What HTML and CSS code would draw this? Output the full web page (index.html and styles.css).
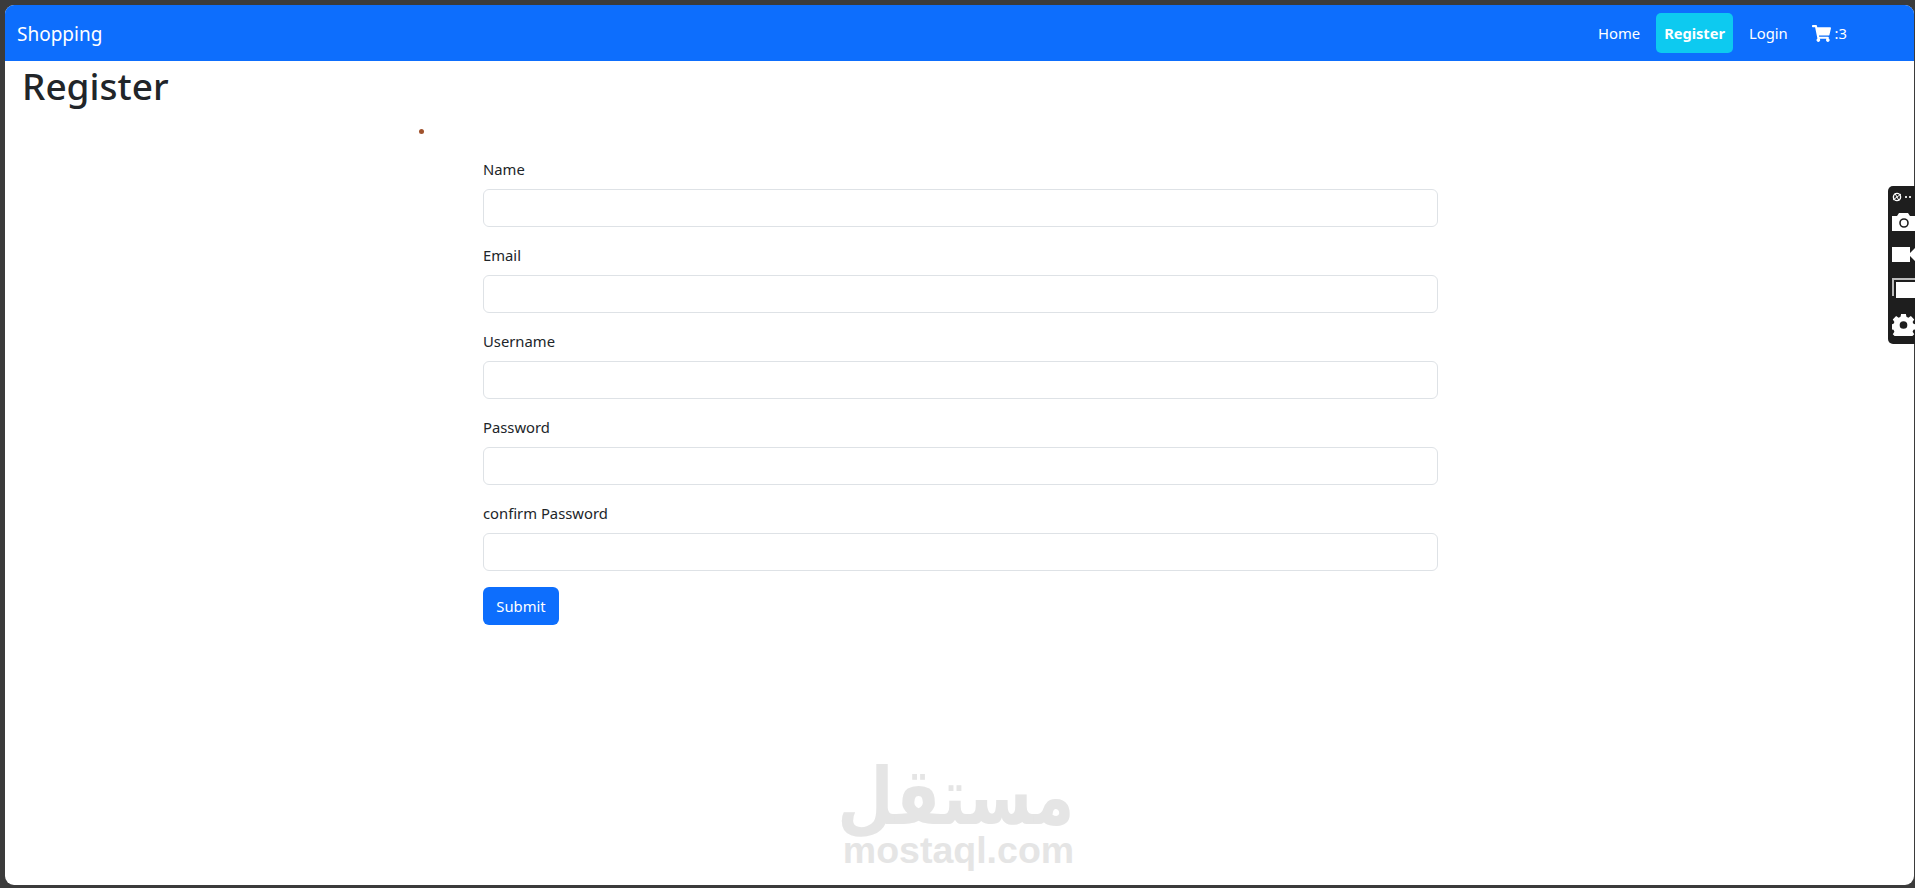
FILE: index.html
```html
<!DOCTYPE html>
<html lang="en">
<head>
  <meta charset="UTF-8" />
  <meta name="viewport" content="width=device-width, initial-scale=1.0" />
  <title>Register</title>
  <link rel="stylesheet" href="styles.css">
</head>
<body>
  <div class="app">
    <nav class="navbar">
      <a class="brand" href="#">Shopping</a>
      <ul class="nav-list">
        <li><a class="nav-link" href="#">Home</a></li>
        <li><a class="nav-link active" href="#">Register</a></li>
        <li><a class="nav-link" href="#">Login</a></li>
        <li>
          <a class="nav-link" href="#">
            <svg class="cart-icon" viewBox="0 0 576 512"><path fill="currentColor" d="M528.12 301.319l47.273-208C578.806 78.301 567.391 64 551.99 64H159.208l-9.166-44.81C147.758 8.021 137.93 0 126.529 0H24C10.745 0 0 10.745 0 24v16c0 13.255 10.745 24 24 24h69.883l70.248 343.435C147.325 417.1 136 435.222 136 456c0 30.928 25.072 56 56 56s56-25.072 56-56c0-15.674-6.447-29.835-16.824-40h209.647C430.447 426.165 424 440.326 424 456c0 30.928 25.072 56 56 56s56-25.072 56-56c0-22.172-12.888-41.332-31.579-50.405l5.517-24.276c3.413-15.018-8.002-29.319-23.403-29.319H218.117l-6.545-32h293.145c11.206 0 20.92-7.754 23.403-18.681z"/></svg>
            :3
          </a>
        </li>
      </ul>
    </nav>

    <main class="page">
      <h1>Register</h1>
      <div class="summary"><span class="summary-dot"></span></div>

      <form class="register-form">
        <div class="field">
          <label for="name">Name</label>
          <input id="name" type="text">
        </div>
        <div class="field">
          <label for="email">Email</label>
          <input id="email" type="text">
        </div>
        <div class="field">
          <label for="username">Username</label>
          <input id="username" type="text">
        </div>
        <div class="field">
          <label for="password">Password</label>
          <input id="password" type="password">
        </div>
        <div class="field">
          <label for="confirm">confirm Password</label>
          <input id="confirm" type="password">
        </div>
        <button class="submit-btn" type="button">Submit</button>
      </form>
    </main>

    <!-- Watermark -->
    <div class="watermark">
      <div class="watermark-ar" lang="ar" dir="rtl">مستقل</div>
      <div class="watermark-en">mostaql.com</div>
    </div>
  </div>

  <!-- Capture toolbar, cut off by the window edge -->
  <div class="capture-bar">
    <svg class="bar-link" viewBox="0 0 27 12">
      <circle cx="5" cy="6" r="3.6" fill="none" stroke="#fff" stroke-width="1.4"/>
      <path d="M1 9 L9 3 M3 2.500 L7 9.500" stroke="#fff" stroke-width="1"/>
      <rect x="13" y="5" width="2" height="2" fill="#ddd"/>
      <rect x="17" y="5" width="2" height="2" fill="#ddd"/>
    </svg>
    <svg class="bar-icon" viewBox="0 0 23 18">
      <path fill="#fff" d="M0 3H5L7 0H16L18 3H23V18H0Z"/>
      <circle cx="12" cy="10" r="4" fill="none" stroke="#1e1e1e" stroke-width="1.6"/>
    </svg>
    <svg class="bar-icon" viewBox="0 0 23 17">
      <path fill="#fff" d="M0 1H18V7L23 2V15L18 10V16H0Z"/>
    </svg>
    <svg class="bar-icon" viewBox="0 0 23 20">
      <path fill="#bbb" d="M0 0H23V2H2V18H0Z"/>
      <path fill="#fff" d="M4 4H23V20H4Z"/>
    </svg>
    <svg class="bar-icon" viewBox="0 0 24 24">
      <path fill="#fff" fill-rule="evenodd" d="M9.500 1h5l.6 3 2 .9 2.600-1.700 3.500 3.500-1.700 2.600.9 2 3 .6v5l-3 .6-.9 2 1.700 2.600-3.500 3.500-2.600-1.700-2 .9-.6 2h-5l-.6-2-2-.9-2.600 1.700-3.500-3.500 1.700-2.600-.9-2-3-.6v-5l3-.6.9-2-1.700-2.600 3.500-3.500 2.600 1.700 2-.9zM12 8.500a4 4 0 1 0 0 8 4 4 0 0 0 0-8z"/>
    </svg>
  </div>
</body>
</html>
```

FILE: styles.css
```css
* { box-sizing: border-box; }
html, body { height: 100%; }
body {
  margin: 0;
  padding: 5px 1px 3px 5px;
  overflow: hidden;
  background: #3b3b3b;
  font-family: "Noto Sans", sans-serif;
  font-size: 14.8px;
  line-height: 24px;
  color: #212529;
}
a { text-decoration: none; color: inherit; }

.app {
  position: relative;
  height: 100%;
  background: white;
  border-radius: 9px;
  overflow: hidden;
}

/* Navbar */
.navbar {
  display: flex;
  align-items: center;
  justify-content: space-between;
  height: 56px;
  padding: 8px 59px 8px 12px;
  background: #0d6efd;
  color: white;
}
.brand { padding-top: 2px; font-size: 19px; }
.nav-list { display: flex; gap: 8px; margin: 0; padding: 0; list-style: none; }
.nav-link { display: block; height: 40px; padding: 8px; border-radius: 5px; }
.nav-link.active { background: #0dcaf0; font-size: 14.6px; font-weight: 700; }
.cart-icon { width: 19px; height: 17px; vertical-align: -3px; }

/* Page */
.page { padding: 0 17px; }
h1 { margin: 0 0 8px; padding-top: 1px; height: 48px; font-size: 37px; line-height: 48px; font-weight: 500; }
.summary { height: 24px; margin-bottom: 16px; padding-left: 397px; padding-top: 12px; }
.summary-dot { display: block; width: 5px; height: 5px; border-radius: 50%; background: #a0522d; }

/* Form */
.register-form { width: 955px; margin-left: 461px; }
.field { margin-bottom: 16px; }
.field label { display: block; margin-bottom: 8px; }
.field input {
  display: block;
  width: 100%;
  height: 38px;
  padding: 6px 12px;
  border: 1px solid #dee2e6;
  border-radius: 6px;
  background: white;
}
.submit-btn {
  height: 38px;
  width: 76px;
  border: 0;
  border-radius: 6px;
  background: #0d6efd;
  color: white;
  font: inherit;
}

/* Watermark */
.watermark {
  position: absolute;
  left: 837px;
  top: 745px;
  width: 233px;
  color: #e5e5e5;
  text-align: center;
  font-weight: 700;
}
.watermark-ar {
  font-family: "DejaVu Sans", sans-serif;
  font-size: 72px;
  line-height: 84px;
  transform: translate(11px, 5px) scale(.9, 1.1);
}
.watermark-en { font-family: "Liberation Sans", sans-serif; font-size: 37.500px; line-height: 32px; }

/* Capture toolbar */
.capture-bar {
  position: absolute;
  top: 186px;
  right: 0;
  display: flex;
  flex-direction: column;
  width: 27px;
  height: 158px;
  padding: 6px 0 0 4px;
  overflow: hidden;
  background: #1e1e1e;
  border-radius: 5px 0 0 5px;
}
.bar-link { width: 27px; height: 12px; flex: none; margin: -1px 0 10px; }
.bar-icon { width: 23px; flex: none; margin-bottom: 15px; }
```
